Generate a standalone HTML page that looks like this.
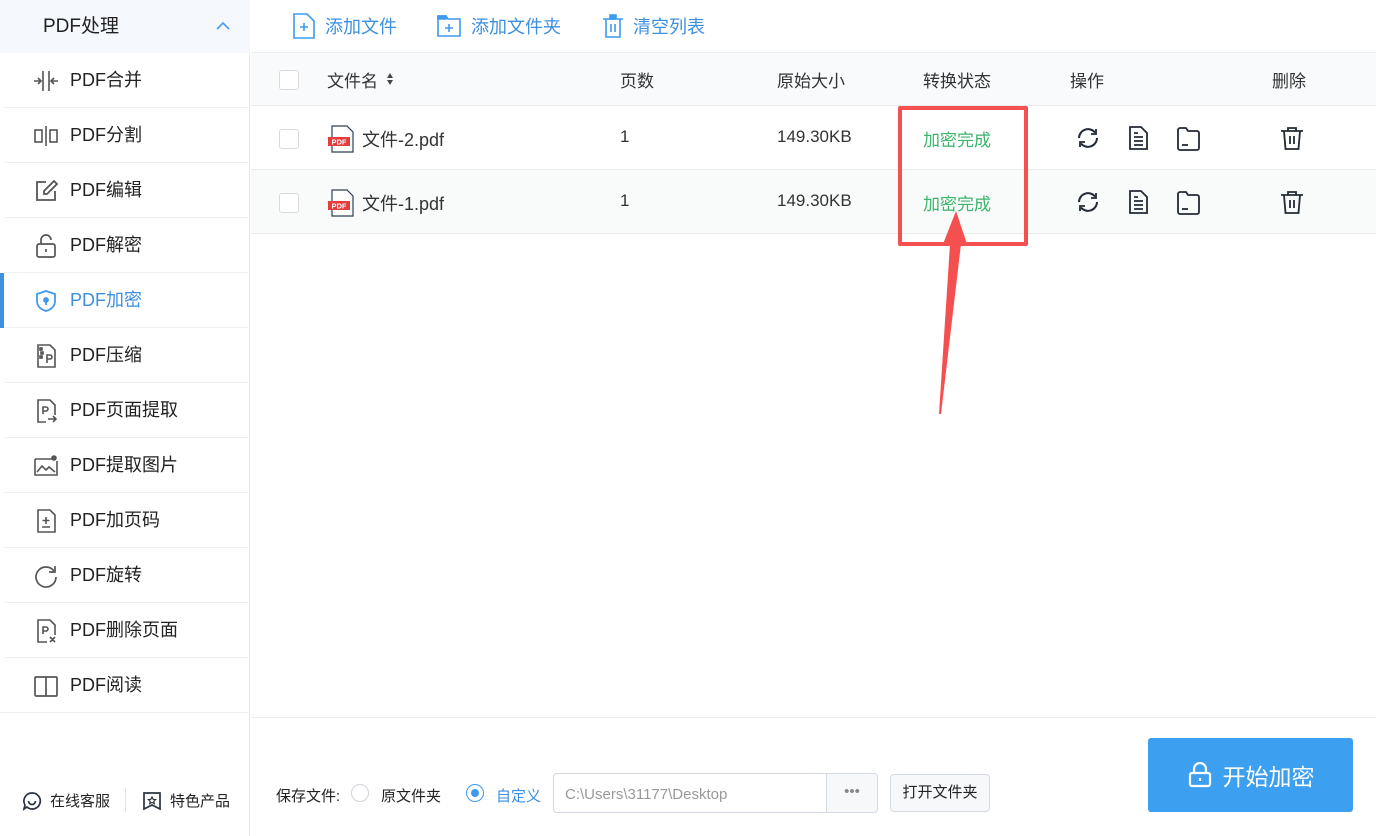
<!DOCTYPE html><html><head><meta charset="utf-8"><style>
*{margin:0;padding:0;box-sizing:border-box}
body{width:1376px;height:836px;position:relative;overflow:hidden;background:#fff;font-family:"Liberation Sans","Noto Sans CJK SC",sans-serif;color:#222}
.abs{position:absolute}
.side{left:0;top:0;width:250px;height:836px;border-right:1px solid #e8e8e8;background:#fff}
.hd{left:0;top:0;width:250px;height:53px;background:#f5f8fc;font-size:19px;line-height:53px;padding-left:43px;color:#222}
.it{left:4px;width:244px;height:55px;border-bottom:1px solid #eef0f2;font-size:18px;line-height:55px;padding-left:66px;color:#222}
.it svg{position:absolute;left:29px;top:15px}
.top{font-size:18px;color:#3d8fe0;top:13px}
.th{font-size:17px;top:67px;color:#333}
.cell{font-size:17px;color:#333}
.cb{width:20px;height:20px;border:1px solid #d8dadd;border-radius:3px;background:#fff}
</style></head><body>
<div class="abs side"></div>
<div class="abs hd">PDF处理<svg class="abs" style="left:215px;top:21px" width="16" height="10" viewBox="0 0 16 10"><path d="M2 8L8 2L14 8" fill="none" stroke="#4a9ef0" stroke-width="1.6"/></svg></div>

<div class="abs it" style="top:53px"><svg width="26" height="26" viewBox="0 0 26 26" fill="none" stroke="#555" stroke-width="1.6"><path d="M10 3v20M16 3v20M1 13h7M5 10l3 3-3 3M25 13h-7M21 10l-3 3 3 3"/></svg>PDF合并</div>
<div class="abs it" style="top:108px"><svg width="26" height="26" viewBox="0 0 26 26" fill="none" stroke="#555" stroke-width="1.6"><rect x="2" y="7" width="7" height="12"/><rect x="17" y="7" width="7" height="12"/><path d="M13 3v20"/></svg>PDF分割</div>
<div class="abs it" style="top:163px"><svg width="26" height="26" viewBox="0 0 26 26" fill="none" stroke="#555" stroke-width="1.8"><path d="M13 4H4v18h18v-9M21 3l3 3-10 10h-3v-3z"/></svg>PDF编辑</div>
<div class="abs it" style="top:218px"><svg width="26" height="26" viewBox="0 0 26 26" fill="none" stroke="#555" stroke-width="1.7"><rect x="4" y="11" width="18" height="13" rx="2"/><path d="M8 11V7a5 5 0 0 1 10 0M13 16v3"/></svg>PDF解密</div>
<div class="abs it" style="top:273px;color:#3d8fe0"><svg width="26" height="26" viewBox="0 0 26 26" fill="none" stroke="#3d9af0" stroke-width="1.8"><path d="M13 3l9 3v7c0 6-5 9-9 10-4-1-9-4-9-10V6z"/><circle cx="13" cy="12" r="2" fill="#3d9af0"/><path d="M13 13v4"/></svg>PDF加密</div>
<div class="abs" style="left:0;top:273px;width:4px;height:55px;background:#3d8fe0"></div>
<div class="abs it" style="top:328px"><svg width="26" height="26" viewBox="0 0 26 26" fill="none" stroke="#555" stroke-width="1.6"><path d="M5 2h12l5 5v17H5z"/><path d="M14 20v-8h3a2 2 0 0 1 0 4h-3"/><rect x="7" y="5" width="2" height="2" fill="#555"/><rect x="8" y="9" width="2" height="2" fill="#555"/><rect x="7" y="13" width="2" height="2" fill="#555"/></svg>PDF压缩</div>
<div class="abs it" style="top:383px"><svg width="26" height="26" viewBox="0 0 26 26" fill="none" stroke="#555" stroke-width="1.6"><path d="M13 24H5V2h12l5 5v10"/><path d="M10 16V9h3a2 2 0 0 1 0 4h-3M15 21h8M20 18l3 3-3 3"/></svg>PDF页面提取</div>
<div class="abs it" style="top:438px"><svg width="26" height="26" viewBox="0 0 26 26" fill="none" stroke="#555" stroke-width="1.6"><path d="M2 6h18M2 6v16h22V8"/><path d="M4 19l5-6 4 4 3-3 6 5"/><circle cx="21" cy="5" r="2" fill="#555"/></svg>PDF提取图片</div>
<div class="abs it" style="top:493px"><svg width="26" height="26" viewBox="0 0 26 26" fill="none" stroke="#555" stroke-width="1.6"><path d="M5 2h12l5 5v17H5z"/><path d="M13 9v7M9.5 12.5h7M9 19h8"/></svg>PDF加页码</div>
<div class="abs it" style="top:548px"><svg width="26" height="26" viewBox="0 0 26 26" fill="none" stroke="#555" stroke-width="1.7"><path d="M21 8A10 10 0 1 0 23 14"/><path d="M22 3v6h-6"/></svg>PDF旋转</div>
<div class="abs it" style="top:603px"><svg width="26" height="26" viewBox="0 0 26 26" fill="none" stroke="#555" stroke-width="1.6"><path d="M14 24H5V2h12l5 5v10"/><path d="M10 16V9h3a2 2 0 0 1 0 4h-3M17 19l5 5M22 19l-5 5"/></svg>PDF删除页面</div>
<div class="abs it" style="top:658px"><svg width="26" height="26" viewBox="0 0 26 26" fill="none" stroke="#555" stroke-width="1.7"><rect x="2" y="4" width="22" height="19" rx="1"/><path d="M13 4v19"/></svg>PDF阅读</div>

<div class="abs" style="left:22px;top:790px;font-size:15px;display:flex;align-items:center;color:#222"><svg width="20" height="20" viewBox="0 0 20 20" fill="none" stroke="#2a3340" stroke-width="1.7"><path d="M10 2a8 8 0 1 1-5 14l-3 2 1-4A8 8 0 0 1 10 2z"/><path d="M6.5 10a3.5 3.5 0 0 0 7 0"/></svg><span style="margin-left:8px">在线客服</span></div>
<div class="abs" style="left:125px;top:788px;width:1px;height:24px;background:#e3e3e3"></div>
<div class="abs" style="left:142px;top:790px;font-size:15px;display:flex;align-items:center;color:#222"><svg width="20" height="20" viewBox="0 0 20 20" fill="none" stroke="#2a3340" stroke-width="1.7"><path d="M2 2h16v16l-8-4-8 4z"/><path d="M10 6l1.2 2.3 2.4.3-1.8 1.6.5 2.4-2.3-1.2-2.3 1.2.5-2.4-1.8-1.6 2.4-.3z" stroke-width="1.2"/></svg><span style="margin-left:8px">特色产品</span></div>

<div class="abs top" style="left:293px;display:flex;align-items:center"><svg width="22" height="26" viewBox="0 0 22 26" fill="none" stroke="#3d9af0" stroke-width="1.6"><path d="M1 1h13l7 7v17H1z"/><path d="M11 10v8M7 14h8"/></svg><span style="margin-left:10px">添加文件</span></div>
<div class="abs top" style="left:437px;display:flex;align-items:center"><svg width="24" height="22" viewBox="0 0 24 22" fill="none" stroke="#3d9af0" stroke-width="1.6"><path d="M1 1h8l2 3h12v17H1z"/><path d="M1 1h8v3H1z" fill="#3d9af0"/><path d="M12 9v8M8 13h8"/></svg><span style="margin-left:10px">添加文件夹</span></div>
<div class="abs top" style="left:602px;display:flex;align-items:center"><svg width="22" height="24" viewBox="0 0 22 24" fill="none" stroke="#3d9af0" stroke-width="1.6"><path d="M1 5h20M4 5v18h14V5"/><rect x="8" y="1" width="6" height="4" fill="#3d9af0"/><path d="M9 10v8M13 10v8"/></svg><span style="margin-left:9px">清空列表</span></div>

<div class="abs" style="left:251px;top:52px;width:1125px;height:54px;background:#f8fafb;border-top:1px solid #eceef0;border-bottom:1px solid #e8eaee"></div>
<div class="abs" style="left:251px;top:106px;width:1125px;height:64px;background:#fff;border-bottom:1px solid #e8eaee"></div>
<div class="abs" style="left:251px;top:170px;width:1125px;height:64px;background:#f9fbfb;border-bottom:1px solid #e8eaee"></div>

<div class="abs cb" style="left:279px;top:70px"></div>
<div class="abs th" style="left:327px">文件名</div>
<svg class="abs" style="left:386px;top:72px" width="8" height="14" viewBox="0 0 8 14"><path d="M4 1L7 6H1zM4 13L7 8H1z" fill="#444"/></svg>
<div class="abs th" style="left:620px">页数</div>
<div class="abs th" style="left:777px">原始大小</div>
<div class="abs th" style="left:923px">转换状态</div>
<div class="abs th" style="left:1070px">操作</div>
<div class="abs th" style="left:1272px">删除</div>

<svg width="0" height="0" style="position:absolute"><defs>
<g id="pdf"><path d="M5 1h15l6 6v20H5z" fill="#fff" stroke="#2e3e55" stroke-width="1.2"/><rect x="1" y="12" width="22" height="9" fill="#e53c3c"/><text x="12" y="19.5" font-size="7.5" font-weight="bold" fill="#fff" text-anchor="middle" font-family="Liberation Sans">PDF</text></g>
<g id="ops" fill="none" stroke="#222a35" stroke-width="2"><path d="M3 12a9 9 0 0 1 16-5.5M21 12a9 9 0 0 1-16 5.5"/><path d="M20 3v5h-5M4 21v-5h5" stroke-width="1.8"/></g>
<g id="doc" fill="none" stroke="#222a35" stroke-width="1.8"><path d="M2 1h11l6 6v16H2z"/><path d="M6 11h9M6 15h9M6 19h9M6 7h4"/></g>
<g id="fold" fill="none" stroke="#222a35" stroke-width="1.8"><path d="M1 3a2 2 0 0 1 2-2h6l2 3h9a2 2 0 0 1 2 2v15a2 2 0 0 1-2 2H3a2 2 0 0 1-2-2z"/><path d="M5 18h6"/></g>
<g id="trash" fill="none" stroke="#222a35" stroke-width="1.8"><path d="M1 5h22M8 5V2h8v3M4 5l1.5 18h13L20 5M10 10v8M14 10v8"/></g>
</defs></svg>

<div class="abs cb" style="left:279px;top:129px"></div>
<svg class="abs" style="left:327px;top:125px" width="28" height="28"><use href="#pdf"/></svg>
<div class="abs cell" style="left:362px;top:126px;font-size:18px">文件-2.pdf</div>
<div class="abs cell" style="left:620px;top:127px">1</div>
<div class="abs cell" style="left:777px;top:127px">149.30KB</div>
<div class="abs cell" style="left:923px;top:126px;color:#3ab56c">加密完成</div>
<svg class="abs" style="left:1076px;top:126px" width="24" height="24"><use href="#ops"/></svg>
<svg class="abs" style="left:1128px;top:126px" width="22" height="25"><use href="#doc"/></svg>
<svg class="abs" style="left:1177px;top:127px" width="24" height="24"><use href="#fold"/></svg>
<svg class="abs" style="left:1280px;top:126px" width="24" height="25"><use href="#trash"/></svg>

<div class="abs cb" style="left:279px;top:193px"></div>
<svg class="abs" style="left:327px;top:189px" width="28" height="28"><use href="#pdf"/></svg>
<div class="abs cell" style="left:362px;top:190px;font-size:18px">文件-1.pdf</div>
<div class="abs cell" style="left:620px;top:191px">1</div>
<div class="abs cell" style="left:777px;top:191px">149.30KB</div>
<div class="abs cell" style="left:923px;top:190px;color:#3ab56c">加密完成</div>
<svg class="abs" style="left:1076px;top:190px" width="24" height="24"><use href="#ops"/></svg>
<svg class="abs" style="left:1128px;top:190px" width="22" height="25"><use href="#doc"/></svg>
<svg class="abs" style="left:1177px;top:191px" width="24" height="24"><use href="#fold"/></svg>
<svg class="abs" style="left:1280px;top:190px" width="24" height="25"><use href="#trash"/></svg>

<div class="abs" style="left:898px;top:106px;width:130px;height:140px;border:4px solid #f55050;border-radius:2px"></div>
<svg class="abs" style="left:0;top:0" width="1376" height="836"><path d="M956 211L967 244L961 244L941 414L939 414L950 244L943 244Z" fill="#f55050"/></svg>

<div class="abs" style="left:251px;top:717px;width:1125px;height:1px;background:#eceef0"></div>
<div class="abs" style="left:0;top:712px;width:250px;height:1px;background:#eceef0"></div>
<div class="abs" style="left:276px;top:785px;font-size:15px;color:#222">保存文件:</div>
<div class="abs" style="left:351px;top:784px;width:18px;height:18px;border:1px solid #cfd3d8;border-radius:50%"></div>
<div class="abs" style="left:381px;top:785px;font-size:15px;color:#222">原文件夹</div>
<div class="abs" style="left:466px;top:784px;width:18px;height:18px;border:1px solid #3d9af0;border-radius:50%"><div style="margin:4px;width:8px;height:8px;border-radius:50%;background:#3d9af0"></div></div>
<div class="abs" style="left:496px;top:785px;font-size:15px;color:#3d8fe0">自定义</div>
<div class="abs" style="left:553px;top:773px;width:325px;height:40px;border:1px solid #d4d9e2;border-radius:4px;background:#fff"></div>
<div class="abs" style="left:826px;top:774px;width:51px;height:38px;border-left:1px solid #d4d9e2;background:#f7f8fa;color:#888;font-size:15px;text-align:center;line-height:36px;border-radius:0 4px 4px 0">•••</div>
<div class="abs" style="left:565px;top:786px;font-size:15px;color:#999">C:\Users\31177\Desktop</div>
<div class="abs" style="left:890px;top:774px;width:100px;height:38px;border:1px solid #d4d9e2;border-radius:4px;background:#f7f8fa;font-size:15px;line-height:36px;text-align:center;color:#222">打开文件夹</div>
<div class="abs" style="left:1148px;top:738px;width:205px;height:74px;background:#3d9ff0;border-radius:3px;color:#fff;font-size:23px;display:flex;align-items:center;justify-content:center"><svg width="26" height="26" viewBox="0 0 26 26" fill="none" stroke="#fff" stroke-width="2.2"><rect x="3" y="11" width="20" height="13" rx="2"/><path d="M7 11V7a6 6 0 0 1 12 0v4M13 16v3"/></svg><span style="margin-left:10px">开始加密</span></div>
</body></html>
